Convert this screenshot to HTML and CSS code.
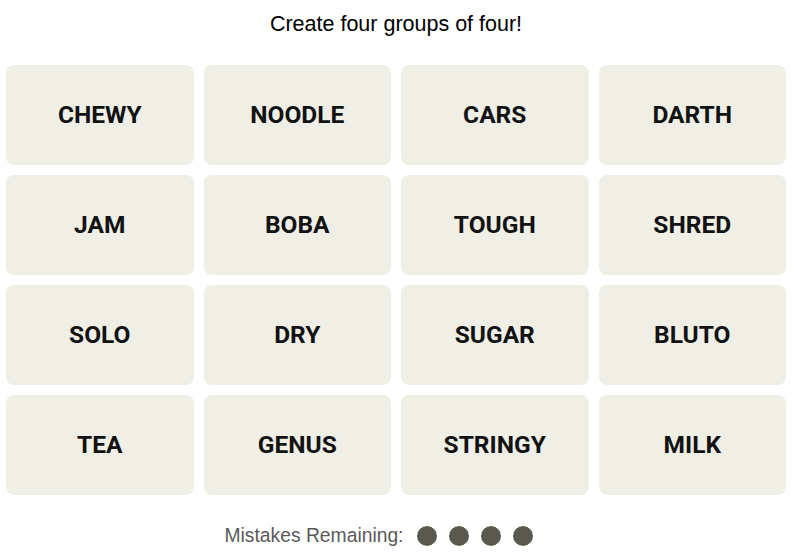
FILE: index.html
```html
<!DOCTYPE html>
<html>
<head>
<meta charset="utf-8">
<link rel="stylesheet" href="styles.css">
</head>
<body>
<main class="game">
  <p class="prompt">Create four groups of four!</p>
  <section class="board">
    <div class="tile">CHEWY</div>
    <div class="tile">NOODLE</div>
    <div class="tile">CARS</div>
    <div class="tile">DARTH</div>
    <div class="tile">JAM</div>
    <div class="tile">BOBA</div>
    <div class="tile">TOUGH</div>
    <div class="tile">SHRED</div>
    <div class="tile">SOLO</div>
    <div class="tile">DRY</div>
    <div class="tile">SUGAR</div>
    <div class="tile">BLUTO</div>
    <div class="tile">TEA</div>
    <div class="tile">GENUS</div>
    <div class="tile">STRINGY</div>
    <div class="tile">MILK</div>
  </section>
  <div class="mistakes">
    <span class="mistakes-label">Mistakes Remaining:</span>
    <span class="dots">
      <span class="dot"></span>
      <span class="dot"></span>
      <span class="dot"></span>
      <span class="dot"></span>
    </span>
  </div>
</main>
</body>
</html>
```
FILE: styles.css
```css
html, body {
  margin: 0;
  padding: 0;
  background: #ffffff;
}
body {
  font-family: "Liberation Sans", Arial, sans-serif;
  color: #121212;
}
.game {
  display: flex;
  flex-direction: column;
  align-items: center;
  padding: 12px 0 0;
}
.prompt {
  margin: 0 0 0 -3px;
  font-size: 21.5px;
  line-height: 24px;
  color: #000;
}
.board {
  margin: 29px 3px 0 0;
  width: 780px;
  display: grid;
  grid-template-columns: repeat(4, 1fr);
  grid-auto-rows: 100px;
  gap: 10px;
}
.tile {
  background: #efefe6;
  border-radius: 8px;
  display: flex;
  align-items: center;
  justify-content: center;
  padding-bottom: 2px;
  box-sizing: border-box;
  font-family: Roboto, "Liberation Sans", sans-serif;
  font-weight: 700;
  font-size: 24.5px;
  color: #121212;
}
.mistakes {
  margin: 30px 37px 0 0;
  display: flex;
  align-items: center;
  height: 22px;
  gap: 14px;
}
.mistakes-label {
  font-size: 19.3px;
  line-height: 22px;
  color: #5a5a5a;
}
.dots {
  display: flex;
  gap: 12px;
}
.dot {
  width: 20px;
  height: 20px;
  border-radius: 50%;
  background: #5a594e;
}
```
